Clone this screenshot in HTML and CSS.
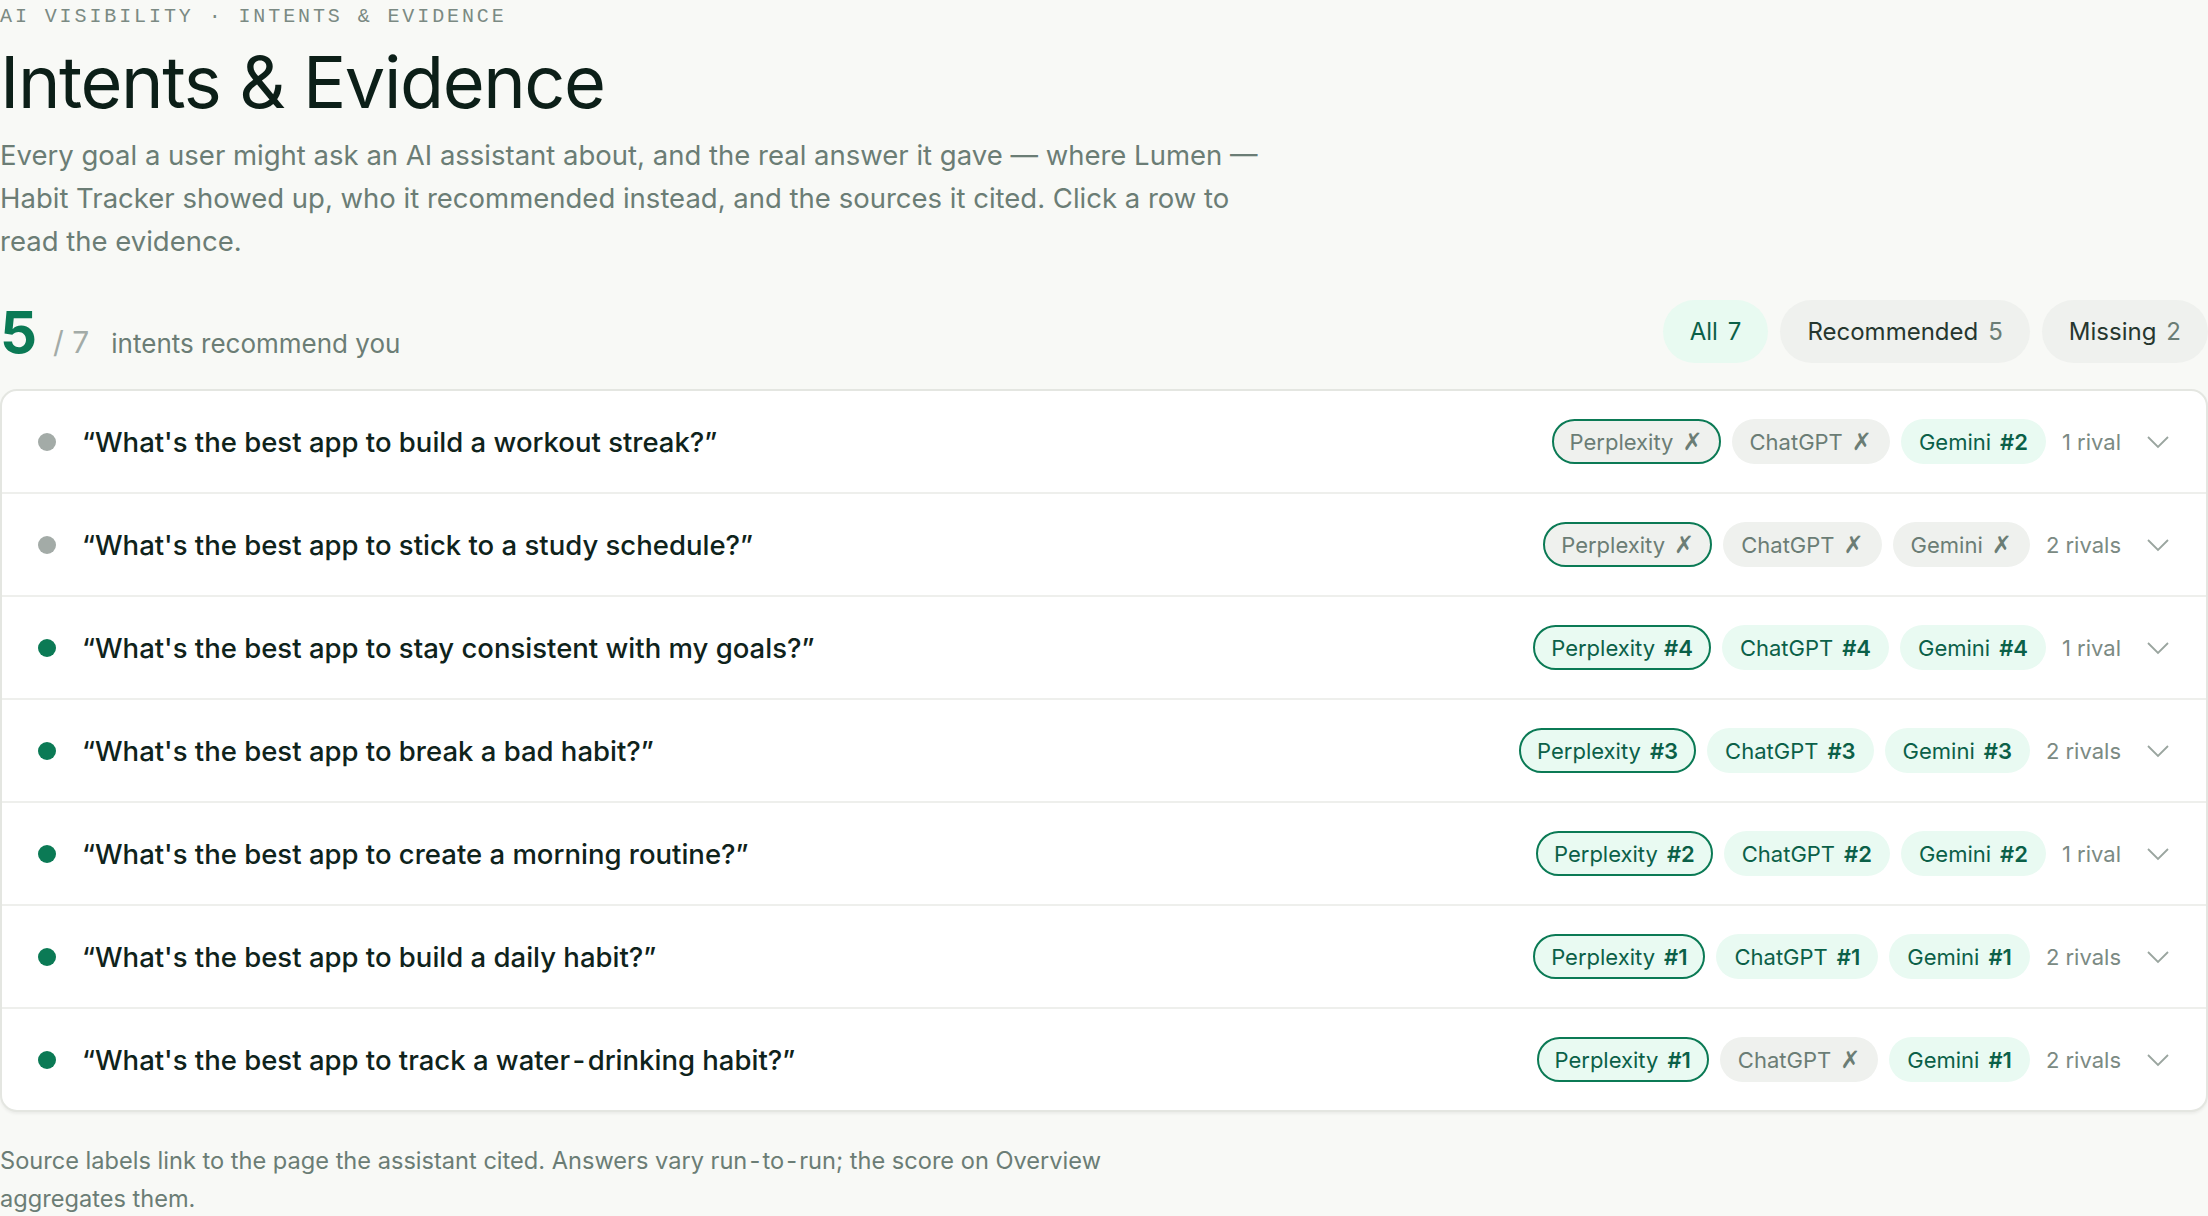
FILE: index.html
```html
<!DOCTYPE html>
<html>
<head lang="en">
    <meta charset="UTF-8">
    <title>Intents &amp; Evidence</title>
    <link rel="stylesheet" href="styles.css">
</head>
<body>
<div class="page">
    <div class="eyebrow">AI VISIBILITY · INTENTS &amp; EVIDENCE</div>
    <h1 class="title">Intents &amp; Evidence</h1>
    <p class="lead">Every goal a user might ask an AI assistant about, and the real answer it gave — where Lumen — Habit Tracker showed up, who it recommended instead, and the sources it cited. Click a row to read the evidence.</p>

    <div class="toolbar">
        <div class="stat">
            <span class="stat-num">5</span>
            <span class="stat-total">/ 7</span>
            <span class="stat-label">intents recommend you</span>
        </div>
        <div class="filters">
            <button class="filter active">All <span class="count">7</span></button>
            <button class="filter">Recommended <span class="count">5</span></button>
            <button class="filter">Missing <span class="count">2</span></button>
        </div>
    </div>

    <ul class="intents">
        <li class="intent">
            <span class="dot"></span>
            <span class="question">“What's the best app to build a workout streak?”</span>
            <div class="engines">
                <span class="chip miss main">Perplexity <i>✗</i></span>
                <span class="chip miss">ChatGPT <i>✗</i></span>
                <span class="chip hit">Gemini <b>#2</b></span>
                <span class="rivals">1 rival</span>
                <svg class="chev" width="24" height="24" viewBox="0 0 24 24"><polyline points="2,7 12,17 22,7"/></svg>
            </div>
        </li>
        <li class="intent">
            <span class="dot"></span>
            <span class="question">“What's the best app to stick to a study schedule?”</span>
            <div class="engines">
                <span class="chip miss main">Perplexity <i>✗</i></span>
                <span class="chip miss">ChatGPT <i>✗</i></span>
                <span class="chip miss">Gemini <i>✗</i></span>
                <span class="rivals">2 rivals</span>
                <svg class="chev" width="24" height="24" viewBox="0 0 24 24"><polyline points="2,7 12,17 22,7"/></svg>
            </div>
        </li>
        <li class="intent">
            <span class="dot on"></span>
            <span class="question">“What's the best app to stay consistent with my goals?”</span>
            <div class="engines">
                <span class="chip hit main">Perplexity <b>#4</b></span>
                <span class="chip hit">ChatGPT <b>#4</b></span>
                <span class="chip hit">Gemini <b>#4</b></span>
                <span class="rivals">1 rival</span>
                <svg class="chev" width="24" height="24" viewBox="0 0 24 24"><polyline points="2,7 12,17 22,7"/></svg>
            </div>
        </li>
        <li class="intent">
            <span class="dot on"></span>
            <span class="question">“What's the best app to break a bad habit?”</span>
            <div class="engines">
                <span class="chip hit main">Perplexity <b>#3</b></span>
                <span class="chip hit">ChatGPT <b>#3</b></span>
                <span class="chip hit">Gemini <b>#3</b></span>
                <span class="rivals">2 rivals</span>
                <svg class="chev" width="24" height="24" viewBox="0 0 24 24"><polyline points="2,7 12,17 22,7"/></svg>
            </div>
        </li>
        <li class="intent">
            <span class="dot on"></span>
            <span class="question">“What's the best app to create a morning routine?”</span>
            <div class="engines">
                <span class="chip hit main">Perplexity <b>#2</b></span>
                <span class="chip hit">ChatGPT <b>#2</b></span>
                <span class="chip hit">Gemini <b>#2</b></span>
                <span class="rivals">1 rival</span>
                <svg class="chev" width="24" height="24" viewBox="0 0 24 24"><polyline points="2,7 12,17 22,7"/></svg>
            </div>
        </li>
        <li class="intent">
            <span class="dot on"></span>
            <span class="question">“What's the best app to build a daily habit?”</span>
            <div class="engines">
                <span class="chip hit main">Perplexity <b>#1</b></span>
                <span class="chip hit">ChatGPT <b>#1</b></span>
                <span class="chip hit">Gemini <b>#1</b></span>
                <span class="rivals">2 rivals</span>
                <svg class="chev" width="24" height="24" viewBox="0 0 24 24"><polyline points="2,7 12,17 22,7"/></svg>
            </div>
        </li>
        <li class="intent">
            <span class="dot on"></span>
            <span class="question">“What's the best app to track a water&#8202;-&#8202;drinking habit?”</span>
            <div class="engines">
                <span class="chip hit main">Perplexity <b>#1</b></span>
                <span class="chip miss">ChatGPT <i>✗</i></span>
                <span class="chip hit">Gemini <b>#1</b></span>
                <span class="rivals">2 rivals</span>
                <svg class="chev" width="24" height="24" viewBox="0 0 24 24"><polyline points="2,7 12,17 22,7"/></svg>
            </div>
        </li>
    </ul>

    <p class="note">Source labels link to the page the assistant cited. Answers vary run&#8202;-&#8202;to&#8202;-&#8202;run; the score on Overview aggregates them.</p>
</div>
</body>
</html>
```

FILE: styles.css
```css
* {
    margin: 0;
    padding: 0;
    box-sizing: border-box;
}
body {
    background: #f8f9f6;
    font-family: Inter, "Noto Sans", sans-serif;
    color: #0c1f18;
}
.page {
    width: 100%;
}
/* header */
.eyebrow {
    font: 400 20px/34px "Liberation Mono", monospace;
    letter-spacing: 2.9px;
    color: #7b8a83;
}
.title {
    margin-top: 8px;
    font-size: 72px;
    line-height: 79px;
    font-weight: 400;
    letter-spacing: -1.4px;
    color: #0c1f18;
}
.lead {
    margin-top: 13px;
    max-width: 1268px;
    font-size: 27.5px;
    line-height: 43px;
    color: #6b7d75;
}
/* score + filters */
.toolbar {
    margin-top: 37px;
    display: flex;
    align-items: center;
    justify-content: space-between;
}
.stat {
    display: flex;
    align-items: baseline;
    line-height: 1;
}
.stat-num {
    font-size: 58px;
    font-weight: 700;
    color: #0b7a55;
}
.stat-total {
    margin-left: 16px;
    font-size: 30px;
    color: #a3aba7;
}
.stat-label {
    margin-left: 22px;
    font-size: 26px;
    color: #6b7d75;
}
.filters {
    display: flex;
    gap: 12px;
}
.filter {
    display: flex;
    align-items: center;
    gap: 10px;
    height: 63px;
    padding: 0 27px;
    border: none;
    border-radius: 32px;
    background: #eff1ee;
    font-family: inherit;
    font-size: 24px;
    color: #26372f;
}
.filter .count {
    color: #6b7d75;
}
.filter.active {
    background: #e8faf1;
    color: #0b6048;
}
.filter.active .count {
    color: #0b6048;
}
/* intents list */
.intents {
    margin-top: 26px;
    list-style: none;
    background: #fff;
    border: 2px solid #e4e6e1;
    border-radius: 17px;
    box-shadow: 0 2px 3px rgba(0, 0, 0, 0.05);
}
.intent {
    display: flex;
    align-items: center;
    padding: 28px 36px;
    border-bottom: 2px solid #eeefec;
    cursor: pointer;
}
.intent:last-child {
    border-bottom: none;
}
.dot {
    width: 18px;
    height: 18px;
    border-radius: 50%;
    background: #a3aba7;
    flex-shrink: 0;
}
.dot.on {
    background: #0b7a55;
}
.question {
    margin-left: 26px;
    font-size: 27.5px;
    font-weight: 500;
    color: #0f231b;
}
.engines {
    margin-left: auto;
    display: flex;
    align-items: center;
    gap: 11px;
}
.chip {
    display: flex;
    align-items: center;
    gap: 9px;
    height: 45px;
    padding: 0 16px;
    border: 2px solid transparent;
    border-radius: 23px;
    font-size: 22px;
    white-space: nowrap;
}
.chip i {
    font-style: normal;
    font-family: "DejaVu Sans", sans-serif;
    font-size: 24px;
    line-height: 1;
}
.chip b {
    font-weight: 600;
}
.chip.hit {
    background: #e9faf2;
    color: #0b6048;
}
.chip.miss {
    background: #eff1ee;
    color: #6b7d75;
}
.chip.main {
    border-color: #0b7a55;
}
.rivals {
    margin-left: 5px;
    font-size: 22px;
    color: #7b8a83;
    white-space: nowrap;
}
.chev {
    margin-left: 14px;
    fill: none;
    stroke: #9aa59f;
    stroke-width: 1.8;
}
/* footnote */
.note {
    margin-top: 30px;
    max-width: 1126px;
    font-size: 23.6px;
    line-height: 38px;
    color: #6b7d75;
}
```
